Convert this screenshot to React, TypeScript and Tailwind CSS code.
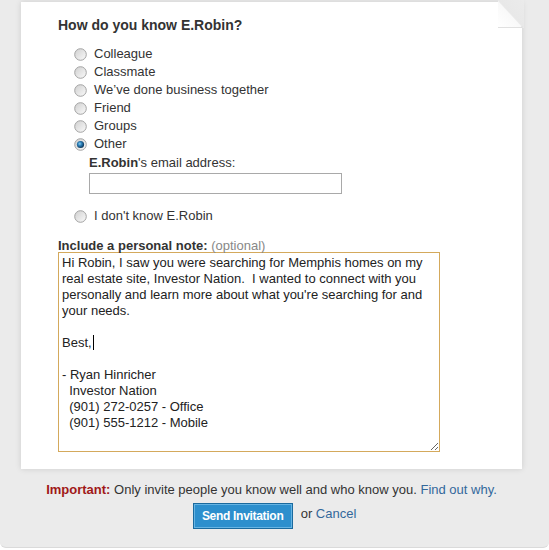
import React from 'react';

const Radio: React.FC<{ checked?: boolean }> = ({ checked }) => (
  <svg width="13" height="13" viewBox="0 0 13 13" className="shrink-0">
    <defs>
      <linearGradient id="rg-off" x1="0" y1="0" x2="1" y2="1">
        <stop offset="0" stopColor="#cfcfcf" />
        <stop offset="1" stopColor="#fbfbfb" />
      </linearGradient>
      <radialGradient id="rg-on" cx="0.4" cy="0.4" r="0.6">
        <stop offset="0" stopColor="#8fd0f2" />
        <stop offset="0.45" stopColor="#2b7fb8" />
        <stop offset="1" stopColor="#0c3558" />
      </radialGradient>
    </defs>
    <circle cx="6.5" cy="6.5" r="5.8" fill="url(#rg-off)" stroke="#a3a3a3" strokeWidth="1" />
    {checked && <circle cx="6.5" cy="6.5" r="3.6" fill="url(#rg-on)" />}
  </svg>
);

const options = ['Colleague', 'Classmate', 'We\u2019ve done business together', 'Friend', 'Groups', 'Other'];

const note = `Hi Robin, I saw you were searching for Memphis homes on my real estate site, Investor Nation.  I wanted to connect with you personally and learn more about what you're searching for and your needs.

Best,`;

const signature = `

- Ryan Hinricher
  Investor Nation
  (901) 272-0257 - Office
  (901) 555-1212 - Mobile`;

const App: React.FC = () => {
  return (
    <div className="w-[549px] h-[548px] bg-[#ebebeb] rounded-b-[6px] border-b border-[#dadada] font-['Liberation_Sans',Arial,sans-serif] text-[#333]">
      <div className="ml-[21px] w-[501px] pt-[2px]">
        <div className="relative bg-white shadow-[0_0_6px_rgba(0,0,0,0.13)] pl-[37px] pt-[15px] pb-[17px]">
          {/* folded corner */}
          <svg width="26" height="28" viewBox="0 0 26 28" className="absolute right-[-2px] top-[-2px]">
            <defs>
              <linearGradient id="fold-bg" x1="0" y1="1" x2="1" y2="0">
                <stop offset="0" stopColor="#d9d9d9" />
                <stop offset="0.5" stopColor="#e8e8e8" />
                <stop offset="1" stopColor="#ebebeb" />
              </linearGradient>
              <linearGradient id="fold-flap" x1="0" y1="1" x2="1" y2="0">
                <stop offset="0" stopColor="#ffffff" />
                <stop offset="0.7" stopColor="#f6f6f6" />
                <stop offset="1" stopColor="#e6e6e6" />
              </linearGradient>
            </defs>
            <rect x="0" y="0" width="26" height="28" fill="#ebebeb" />
            <polygon points="0,0 26,0 26,28" fill="url(#fold-bg)" />
            <polygon points="0,1 0,27 24,27" fill="url(#fold-flap)" />
            <line x1="0" y1="27.5" x2="24" y2="27.5" stroke="#e0e0e0" strokeWidth="1" />
            <line x1="24" y1="26" x2="24" y2="28" stroke="#dedede" strokeWidth="1" />
          </svg>

          <h2 className="text-[14px] font-bold leading-[16px] text-[#333]">How do you know E.Robin?</h2>

          <div className="mt-[12px] pl-[16px]">
            {options.map((o) => (
              <div key={o} className="flex items-center gap-[7px] h-[18px] text-[13px]">
                <Radio checked={o === 'Other'} />
                <span>{o}</span>
              </div>
            ))}
            <div className="pl-[15px]">
              <div className="text-[13px] leading-[16px] mt-[2px]">
                <b>E.Robin</b>'s email address:
              </div>
              <input
                type="text"
                className="mt-[2px] block w-[253px] h-[21px] border border-[#a9a9a9] outline-none px-[2px] text-[13px]"
              />
            </div>
            <div className="flex items-center gap-[7px] h-[18px] text-[13px] mt-[13px]">
              <Radio />
              <span>I don't know E.Robin</span>
            </div>
          </div>

          <div className="mt-[14px] text-[13px] leading-[13px]">
            <b>Include a personal note:</b> <span className="text-[#888]">(optional)</span>
          </div>
          <div className="w-[382px] h-[200px] border border-[#d4a95c] px-[3px] pt-[2px] text-[13px] leading-[16px] text-[#222] whitespace-pre-wrap resize overflow-auto">
            {note}
            <span className="inline-block w-[1px] h-[15px] bg-black align-[-3px] ml-[1px]" />
            {signature}
          </div>
        </div>

        <div className="mt-[13px] text-center text-[13px] leading-[16px]">
          <b className="text-[#a01818]">Important:</b> Only invite people you know well and who know you.{' '}
          <a href="#" className="text-[#33689b]">Find out why.</a>
        </div>

        <div className="mt-[5px] flex justify-center items-start gap-[8px] pl-[6px]">
          <button className="w-[100px] h-[26px] bg-[#2d8fcd] border border-[#1b6a9e] shadow-[inset_0_0_0_1px_#66b4e3] text-white font-bold text-[12px] tracking-[-0.3px]">
            Send Invitation
          </button>
          <span className="text-[13px] leading-[16px] mt-[3px]">
            or <a href="#" className="text-[#33689b]">Cancel</a>
          </span>
        </div>
      </div>
    </div>
  );
};

export default App;
